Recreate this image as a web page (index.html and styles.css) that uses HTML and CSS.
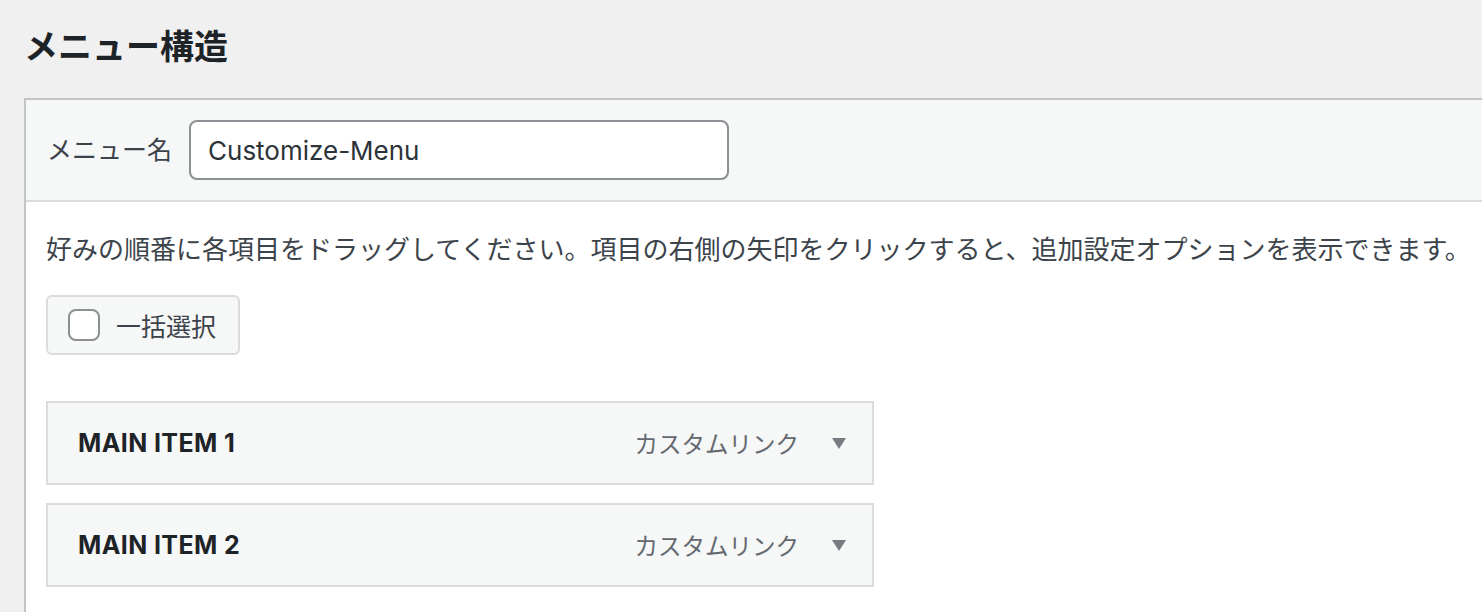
FILE: index.html
```html
<!DOCTYPE html>
<html lang="ja">
<head>
<meta charset="utf-8">
<title>メニュー構造</title>
<link rel="stylesheet" href="styles.css">
</head>
<body>
<h1 class="page-title">メニュー構造</h1>
<div class="panel">
  <div class="panel-header">
    <label class="name-label" for="menu-name">メニュー名</label>
    <input class="name-input" id="menu-name" type="text" value="Customize-Menu">
  </div>
  <div class="panel-body">
    <p class="desc">好みの順番に各項目をドラッグしてください。項目の右側の矢印をクリックすると、追加設定オプションを表示できます。</p>
    <label class="bulk-btn"><span class="check"></span><span class="bulk-text">一括選択</span></label>
    <ul class="menu-list">
      <li class="menu-item">
        <span class="item-title">MAIN ITEM 1</span>
        <span class="item-type">カスタムリンク</span>
        <span class="arrow"></span>
      </li>
      <li class="menu-item">
        <span class="item-title">MAIN ITEM 2</span>
        <span class="item-type">カスタムリンク</span>
        <span class="arrow"></span>
      </li>
    </ul>
  </div>
</div>
</body>
</html>
```
FILE: styles.css
```css
* { box-sizing: border-box; }
html, body {
  margin: 0;
  padding: 0;
  background: #f0f0f1;
  overflow: hidden;
  height: 612px;
}
body {
  font-family: Inter, "Noto Sans CJK JP", sans-serif;
  color: #1d2327;
}
.page-title {
  margin: 0;
  padding: 27px 24px 0;
  font-size: 34px;
  line-height: 40px;
  font-weight: 700;
  color: #1d2327;
}
.panel {
  margin: 31px -40px 0 24px;
  border: 2px solid #c3c4c7;
  border-bottom: 0;
  background: #fff;
  height: 514px;
  overflow: hidden;
}
.panel-header {
  display: flex;
  align-items: center;
  gap: 17px;
  background: #f6f7f7;
  border-bottom: 2px solid #dcdcde;
  padding: 20px 21px;
}
.name-label {
  font-size: 25px;
  color: #3c434a;
  line-height: 36px;
}
.name-input {
  width: 540px;
  height: 60px;
  border: 2px solid #8c8f94;
  border-radius: 8px;
  background: #fff;
  padding: 0 17px;
  font-family: Inter, "Noto Sans CJK JP", sans-serif;
  font-size: 26px;
  color: #2c3338;
  outline: none;
}
.panel-body {
  padding: 29px 20px 0;
}
.desc {
  margin: 0;
  font-size: 26px;
  line-height: 38px;
  color: #3c434a;
  white-space: nowrap;
}
.bulk-btn {
  margin-top: 26px;
  display: inline-flex;
  align-items: center;
  gap: 16px;
  height: 60px;
  padding: 0 22px 0 20px;
  background: #f6f7f7;
  border: 2px solid #dcdcde;
  border-radius: 6px;
}
.check {
  width: 32px;
  height: 32px;
  border: 2px solid #8c8f94;
  border-radius: 8px;
  background: #fff;
}
.bulk-text {
  font-size: 25px;
  color: #3c434a;
}
.menu-list {
  list-style: none;
  margin: 46px 0 0;
  padding: 0;
  width: 828px;
  display: flex;
  flex-direction: column;
  gap: 18px;
}
.menu-item {
  display: flex;
  align-items: center;
  height: 84px;
  border: 2px solid #dcdcde;
  background: #f6f7f7;
  padding: 0 26px 0 30px;
}
.item-title {
  flex: 1;
  font-size: 25px;
  font-weight: 700;
  letter-spacing: 0.4px;
  color: #1d2327;
}
.item-type {
  font-size: 23.5px;
  color: #646970;
}
.arrow {
  margin-left: 33px;
  width: 0;
  height: 0;
  border-left: 7.5px solid transparent;
  border-right: 7.5px solid transparent;
  border-top: 11px solid #787c82;
}
```
